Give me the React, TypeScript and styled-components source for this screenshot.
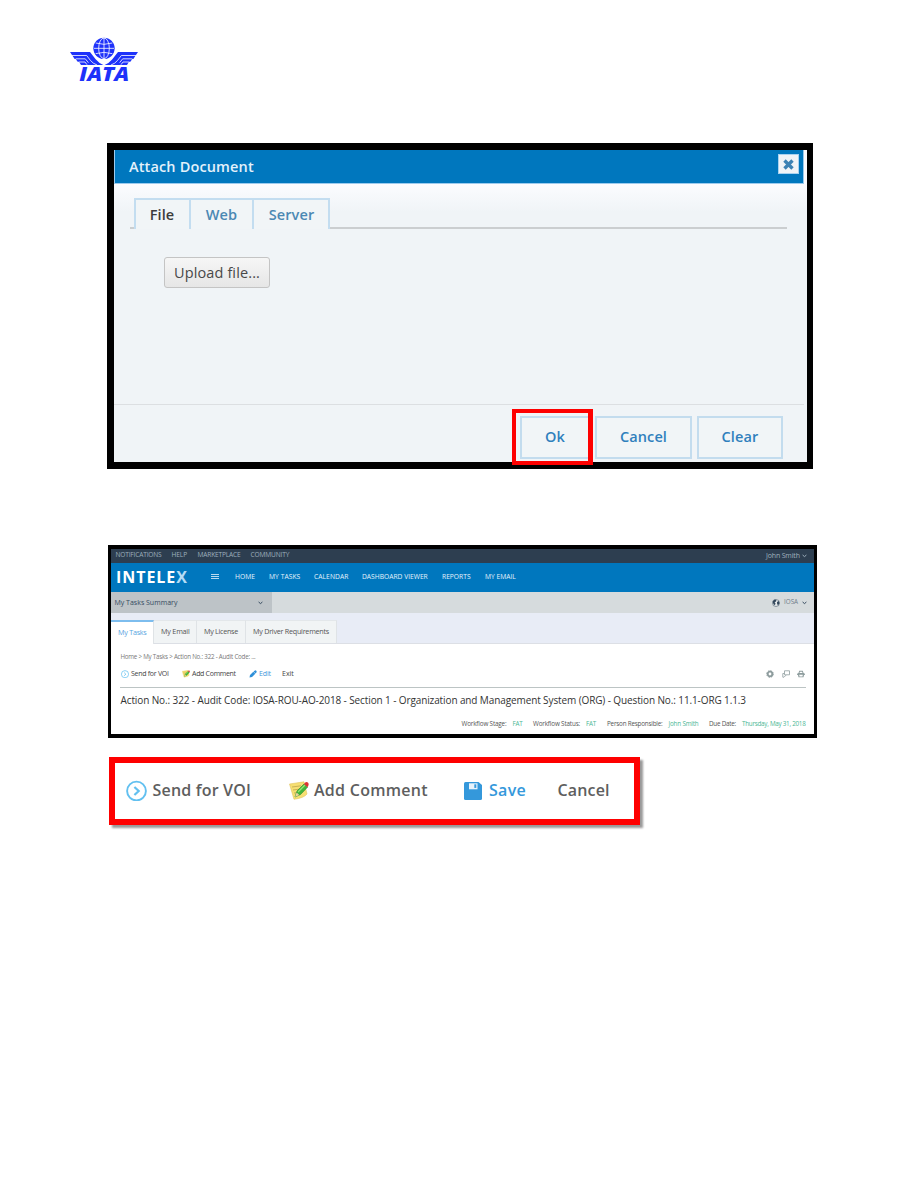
import React from "react";
import styled, { createGlobalStyle } from "styled-components";

const Global = createGlobalStyle`
  * { box-sizing: border-box; }
  body { margin: 0; background: #fff; font-family: "Open Sans", sans-serif; }
  svg { display: block; flex: none; }
`;

const Page = styled.main`
  width: 918px;
  height: 1188px;
  background: #fff;
  overflow: hidden;
`;
const LogoBar = styled.header`
  height: 143px;
  padding: 36px 0 0 69px;
`;

const Label = styled.span<{ $w: number; $size: number; $weight?: number; $color?: string; $track?: number; $ml?: number }>`
  display: block;
  flex: none;
  width: ${(p) => p.$w}px;
  margin-left: ${(p) => p.$ml ?? 0}px;
  font-size: ${(p) => p.$size}px;
  font-weight: ${(p) => p.$weight ?? 400};
  color: ${(p) => p.$color ?? "inherit"};
  letter-spacing: ${(p) => p.$track ?? 0}px;
  line-height: 1.36;
  white-space: nowrap;
`;

/* Attach Document dialog */
const DialogFrame = styled.section`
  position: relative;
  width: 706px;
  height: 326px;
  margin-left: 107px;
  border: solid #000;
  border-width: 7px 6px 7px 7px;
  background: linear-gradient(#fbfcff 33px, #f0f4f7 62px);
`;
const DialogHeader = styled.div`
  display: flex;
  align-items: center;
  justify-content: space-between;
  width: 690px;
  height: 34px;
  padding: 0 5px 0 14px;
  background: #0077be;
  border: solid #9ccbee;
  border-width: 0 1px 1px 1px;
`;
const CloseButton = styled.button`
  display: grid;
  place-items: center;
  width: 21px;
  height: 20px;
  margin: -5px -1px 0 0;
  padding: 0;
  background: #f0f4f7;
  border: 1px solid #a9d2ef;
`;
const DialogTabs = styled.div`
  display: flex;
  height: 31px;
  margin: 14px 20px 0 16px;
`;
const TabEdge = styled.i<{ $grow?: boolean }>`
  width: 4px;
  flex: ${(p) => (p.$grow ? 1 : "none")};
  border-bottom: 2px solid #cbced0;
`;
const DialogTab = styled.button<{ $w: number; $last?: boolean }>`
  display: flex;
  align-items: center;
  width: ${(p) => p.$w}px;
  padding: 0 0 0 15px;
  border: solid #c3ddf0;
  border-width: 2px ${(p) => (p.$last ? "2px" : 0)} 0 2px;
  background: #f1f5f7;
  font-family: inherit;
`;
const DialogBody = styled.div`
  height: 175px;
  padding: 28px 0 0 50px;
`;
const UploadButton = styled.button`
  display: flex;
  align-items: center;
  width: 106px;
  height: 31px;
  padding: 0 0 0 9px;
  border: 1px solid #c4c4c4;
  border-radius: 3px;
  background: linear-gradient(#f6f6f6, #e6e6e6);
  font-family: inherit;
`;
const DialogFooter = styled.div`
  display: flex;
  width: 690px;
  height: 58px;
  padding: 11px 0 0 406px;
  border-top: 1px solid #dcdfe2;
`;
const FooterButton = styled.button<{ $w: number; $ml?: number }>`
  display: flex;
  align-items: center;
  justify-content: center;
  width: ${(p) => p.$w}px;
  height: 43px;
  margin-left: ${(p) => p.$ml ?? 0}px;
  padding: 0 0 1px;
  border: 2px solid #c3dcee;
  background: #f1f5f7;
  font-family: inherit;
`;
const Highlight = styled.div`
  position: absolute;
  left: 398px;
  top: 259px;
  width: 81px;
  height: 56px;
  border: solid #fe0000;
  border-width: 4px 5px 4px 4px;
`;

/* Task application window */
const AppFrame = styled.section`
  width: 709px;
  height: 193px;
  margin: 76px 0 0 108px;
  border: solid #000;
  border-width: 4px 3px;
  background: #fff;
`;
const Row = styled.div<{ $h: number; $bg?: string; $pad?: string }>`
  display: flex;
  align-items: center;
  height: ${(p) => p.$h}px;
  background: ${(p) => p.$bg ?? "transparent"};
  padding: ${(p) => p.$pad ?? "0"};
`;
const Spacer = styled.i`
  flex: 1;
`;
const Gap = styled.i<{ $w: number }>`
  flex: none;
  width: ${(p) => p.$w}px;
`;
const Brand = styled.span`
  flex: none;
  width: 73px;
  font-size: 16px;
  font-weight: 700;
  letter-spacing: 0.95px;
  line-height: 22px;
  color: #fff;
  white-space: nowrap;

  b {
    font-weight: 700;
    color: #b5dcf5;
  }
`;
const SummaryMenu = styled.div`
  display: flex;
  align-items: center;
  width: 161px;
  height: 21px;
  padding-left: 3.5px;
  background: #bdc3c7;
`;
const AppTabs = styled.nav`
  display: flex;
  align-items: flex-end;
  height: 31px;
  background: #e8ecf6;
  border-bottom: 1px solid #dcdfe5;
`;
const AppTab = styled.div<{ $w: number; $active?: boolean }>`
  display: flex;
  align-items: center;
  width: ${(p) => p.$w}px;
  height: ${(p) => (p.$active ? 24 : 23)}px;
  margin-bottom: ${(p) => (p.$active ? -1 : 0)}px;
  padding-left: 7px;
  padding-bottom: ${(p) => (p.$active ? 1 : 0)}px;
  background: ${(p) => (p.$active ? "#fff" : "#f1f4f5")};
  border-top: ${(p) => (p.$active ? "2px solid #7dbdee" : "1px solid #e3e7ea")};
  border-right: 1px solid #dfe3e6;
`;
const Rule = styled.hr`
  height: 1px;
  margin: 0 8px 0 9px;
  border: 0;
  background: #bcc4c4;
`;

/* Enlarged action bar */
const ActionBar = styled.section`
  display: flex;
  align-items: center;
  width: 531px;
  height: 68px;
  margin: 19px 0 0 109px;
  padding: 0 0 1px 11px;
  border: 6px solid #fe0000;
  box-shadow: 3px 3px 2px rgba(0, 0, 0, 0.4);
`;

const IataLogo = () => (
  <svg width="70" height="54" viewBox="0 0 210 162" fill="#1e32fa">
    <circle cx="105" cy="37" r="32" />
    <g fill="none" stroke="#fff" strokeWidth="2.4">
      <path d="M105 6V68M75 37H135M80 21Q105 29 130 21M80 53Q105 45 130 53" />
      <ellipse cx="105" cy="37" rx="16" ry="31" />
    </g>
    <g id="wing">
      <path d="M3 48H63L80 70Q90 82 103 87H36L30 77H26L20 69H17L11 60Z" />
      <path d="M8 58.500H53L64 73Q72 83 84 87M20 68.500H49L58 80M30 78H48L54 86" fill="none" stroke="#fff" strokeWidth="2.400" />
    </g>
    <use href="#wing" transform="translate(210 0) scale(-1 1)" />
    <text x="31" y="135" fontFamily="Open Sans, sans-serif" fontSize="57" fontWeight="800" fontStyle="italic" textLength="150" lengthAdjust="spacingAndGlyphs">IATA</text>
  </svg>
);
const Chevron = ({ color }: { color: string }) => (
  <svg width="5" height="4" viewBox="0 0 5 4" fill="none" stroke={color} strokeWidth="1">
    <path d="M.6 1l1.9 1.6L4.4 1" />
  </svg>
);
const SendIcon = ({ size }: { size: number }) => (
  <svg width={size} height={size} viewBox="0 0 21 21" fill="none" stroke="#62c0f0">
    <circle cx="10.5" cy="11" r="9.4" strokeWidth="1.9" />
    <path d="M8.4 7l4.3 4-4.3 4" strokeWidth="2.2" />
  </svg>
);
const NoteIcon = ({ size }: { size: number }) => (
  <svg width={size} height={size} viewBox="0 0 20 20">
    <path d="M.5 3L15 .8 18 13Q15 17 5 18.3Z" fill="#f6df72" stroke="#e2c560" strokeWidth=".6" />
    <path d="M3 6l9-1.2M4 9l6-.8M5 12l4-.5" stroke="#c3aa52" strokeWidth=".9" />
    <path d="M6 16l2-6 7-7 3.5 3.2-7 7.3z" fill="#43b53b" stroke="#238a2a" strokeWidth=".6" />
    <path d="M9 11l7-7" stroke="#95e671" strokeWidth="1.2" />
    <path d="M6 16l1.6-4.5 2.7 2.6z" fill="#edd0a0" />
    <path d="M15 3l1.200-1.600Q18 .3 19.300 2q.8 1.600-.8 4.200z" fill="#dc3333" />
  </svg>
);
const PencilIcon = () => (
  <svg width="8" height="8" viewBox="0 0 8 8" fill="#2e8fd8">
    <path d="M.5 7.600L1 5 4.300 1.800 6.300 3.700 3 7zM4.600 1.500L5.900.4Q6.700.1 7.300.8T7.600 2.200L6.500 3.400z" />
  </svg>
);
const DiskIcon = () => (
  <svg width="18" height="18" viewBox="0 0 18 18">
    <path d="M1.500 0H14.500L18 3V16.500Q18 18 16.500 18H1.500Q0 18 0 16.500V1.500Q0 0 1.500 0Z" fill="#3498db" />
    <path d="M5 1.300h8.500v6H5z" fill="#e8f3fb" />
    <path d="M10.300 2.300h2v3.600h-2z" fill="#3498db" />
  </svg>
);
const GlobeIcon = () => (
  <svg width="8" height="8" viewBox="0 0 8 8">
    <circle cx="4" cy="4" r="3.500" fill="#e4e8ea" stroke="#4a5b6c" strokeWidth=".6" />
    <path d="M.6 2.500L2.600.6 4.400.9 4 2.600 2.600 3.300 3.500 4.600 2.900 6.200 1.400 5ZM5 3L6.800 2 7.500 4.200 6 6.500 5.100 4.800Z" fill="#33475b" />
  </svg>
);
const GearIcon = () => (
  <svg width="8" height="8" viewBox="0 0 8 8" fill="none" stroke="#8d9c9d">
    <circle cx="4" cy="4" r="2.300" strokeWidth="1.800" />
    <circle cx="4" cy="4" r="3.300" strokeWidth="1" strokeDasharray="1.500 1.090" />
  </svg>
);
const WindowsIcon = () => (
  <svg width="8" height="8" viewBox="0 0 8 8" fill="none" stroke="#9aa7a8" strokeWidth=".9">
    <path d="M2.500.8h5v4h-5zM2.500 3.500H.8v3.700h1.200L4.200 5" />
  </svg>
);
const PrinterIcon = () => (
  <svg width="8" height="8" viewBox="0 0 8 8" fill="#8d9c9d">
    <path d="M1.500 3L2.200.8h3.600L6.500 3Q8 3 8 5H7L6.500 7.300h-5L1 5H0Q0 3 1.500 3zM2.900 1.700L2.500 3h3L5.100 1.700zM2.200 4.700l.3 1.700h3l.3-1.700z" fillRule="evenodd" />
  </svg>
);

const T = (p: { t: string; w: number; s: number; wt?: number; c?: string; k?: number; ml?: number }) => (
  <Label $w={p.w} $size={p.s} $weight={p.wt} $color={p.c} $track={p.k} $ml={p.ml}>{p.t}</Label>
);

export default function App() {
  const nav = "#e6f3fc";
  const top = "#9fb0bd";
  return (
    <Page>
      <Global />
      <LogoBar><IataLogo /></LogoBar>

      <DialogFrame>
        <DialogHeader>
          <T t="Attach Document" w={125} s={14.5} wt={600} c="#e3f1fb" k={0.14} />
          <CloseButton aria-label="Close">
            <svg width="11" height="11" viewBox="0 0 11 11" stroke="#3c82b4" strokeWidth="3.400"><path d="M1.500 1.500l8 8M9.500 1.500l-8 8" /></svg>
          </CloseButton>
        </DialogHeader>
        <DialogTabs>
          <TabEdge />
          <DialogTab $w={55}><T t="File" w={25} s={14.5} wt={600} c="#3c3c3c" k={0.1} ml={-1.5} /></DialogTab>
          <DialogTab $w={63}><T t="Web" w={32} s={14.5} wt={600} c="#4b88b3" k={0.2} ml={-0.5} /></DialogTab>
          <DialogTab $w={78} $last><T t="Server" w={46} s={14.5} wt={600} c="#4b88b3" k={0.1} ml={-0.5} /></DialogTab>
          <TabEdge $grow />
        </DialogTabs>
        <DialogBody>
          <UploadButton><T t="Upload file..." w={86} s={14.5} c="#484848" k={0.12} /></UploadButton>
        </DialogBody>
        <DialogFooter>
          <FooterButton $w={72}><T t="Ok" w={24} s={14.5} wt={600} c="#2f80bd" k={0.14} ml={-2} /></FooterButton>
          <FooterButton $w={97} $ml={3}><T t="Cancel" w={47} s={14.5} wt={600} c="#2f80bd" k={0.09} /></FooterButton>
          <FooterButton $w={86} $ml={5}><T t="Clear" w={37} s={14.5} wt={600} c="#2f80bd" k={0.12} /></FooterButton>
        </DialogFooter>
        <Highlight />
      </DialogFrame>

      <AppFrame>
        <Row $h={14} $bg="#2d3e50" $pad="0 7px 1px 4.500px">
          <T t="NOTIFICATIONS" w={46} s={6.6} c={top} k={-0.18} />
          <T t="HELP" w={16} s={6.6} c={top} ml={10} k={-0.1} />
          <T t="MARKETPLACE" w={43} s={6.6} c={top} ml={10} k={-0.18} />
          <T t="COMMUNITY" w={39} s={6.6} c={top} ml={10} k={-0.15} />
          <Spacer />
          <T t="John Smith" w={33} s={7} c={top} k={-0.16} />
          <Gap $w={3} />
          <Chevron color={top} />
        </Row>
        <Row $h={29} $bg="#0077be" $pad="0 0 2px 5px">
          <Brand>INTELE<b>X</b></Brand>
          <Gap $w={22} />
          <svg width="8" height="8" viewBox="0 0 8 8" stroke="#b9d9ee" strokeWidth="1"><path d="M0 1.500h8M0 3.500h8M0 5.500h8" /></svg>
          <T t="HOME" w={20} s={6.7} wt={500} c={nav} ml={16} />
          <T t="MY TASKS" w={32} s={6.7} wt={500} c={nav} ml={14} k={0.06} />
          <T t="CALENDAR" w={35} s={6.7} wt={500} c={nav} ml={13} k={0.06} />
          <T t="DASHBOARD VIEWER" w={66} s={6.7} wt={500} c={nav} ml={13} />
          <T t="REPORTS" w={29} s={6.7} wt={500} c={nav} ml={14} />
          <T t="MY EMAIL" w={31} s={6.7} wt={500} c={nav} ml={14} />
        </Row>
        <Row $h={21} $bg="#d6dbdd" $pad="0 7px 0 0">
          <SummaryMenu>
            <T t="My Tasks Summary" w={63} s={7} c="#34495e" />
            <Gap $w={80} />
            <Chevron color="#34495e" />
          </SummaryMenu>
          <Spacer />
          <GlobeIcon />
          <T t="IOSA" w={14} s={6.3} c="#6f7d8a" ml={4} />
          <Gap $w={4} />
          <Chevron color="#34495e" />
        </Row>
        <AppTabs>
          <AppTab $w={43} $active><T t="My Tasks" w={29} s={7.2} c="#57a5df" k={-0.25} /></AppTab>
          <AppTab $w={43}><T t="My Email" w={29} s={7.2} c="#555" k={-0.2} /></AppTab>
          <AppTab $w={49}><T t="My License" w={34} s={7.2} c="#555" k={-0.29} /></AppTab>
          <AppTab $w={91}><T t="My Driver Requirements" w={76} s={7.2} c="#555" k={-0.25} /></AppTab>
        </AppTabs>
        <Row $h={22} $pad="4px 0 0 9.500px">
          <T t="Home > My Tasks > Action No.: 322 - Audit Code: ..." w={135} s={6.2} c="#777" k={-0.215} />
        </Row>
        <Row $h={21} $pad="0 9px 6px 10px">
          <SendIcon size={8} />
          <T t="Send for VOI" w={38} s={7} c="#444" ml={2} k={-0.28} />
          <Gap $w={13} />
          <NoteIcon size={8} />
          <T t="Add Comment" w={44} s={7} c="#444" ml={2} k={-0.3} />
          <Gap $w={13} />
          <PencilIcon />
          <T t="Edit" w={12} s={7} c="#3f96da" ml={2} k={-0.11} />
          <T t="Exit" w={12} s={7} c="#444" ml={11} />
          <Spacer />
          <GearIcon />
          <Gap $w={8} />
          <WindowsIcon />
          <Gap $w={7} />
          <PrinterIcon />
        </Row>
        <Rule />
        <Row $h={24} $pad="2px 0 0 9.500px">
          <T t="Action No.: 322 - Audit Code: IOSA-ROU-AO-2018 - Section 1 - Organization and Management System (ORG) - Question No.: 11.1-ORG 1.1.3" w={625} s={10} wt={500} c="#333" k={-0.11} />
        </Row>
        <Row $h={24} $pad="1px 0 0 350.500px">
          <T t="Workflow Stage:" w={45} s={6.3} c="#555" k={-0.154} />
          <T t="FAT" w={10} s={6.3} c="#4bb795" ml={6} k={-0.2} />
          <T t="Workflow Status:" w={47} s={6.3} c="#555" ml={10.5} k={-0.153} />
          <T t="FAT" w={10} s={6.3} c="#4bb795" ml={6} k={-0.2} />
          <T t="Person Responsible:" w={55.5} s={6.3} c="#555" ml={11} k={-0.2} />
          <T t="John Smith" w={30} s={6.3} c="#4bb795" ml={6} k={-0.18} />
          <T t="Due Date:" w={27} s={6.3} c="#555" ml={10.5} k={-0.23} />
          <T t="Thursday, May 31, 2018" w={63.5} s={6.3} c="#4bb795" ml={6} k={-0.266} />
        </Row>
      </AppFrame>

      <ActionBar>
        <SendIcon size={21} />
        <T t="Send for VOI" w={99} s={16} wt={600} c="#5e5e5e" ml={5.5} k={0.19} />
        <Gap $w={37} />
        <NoteIcon size={20} />
        <T t="Add Comment" w={114} s={16} wt={600} c="#5e5e5e" ml={5.5} k={0.27} />
        <Gap $w={35.5} />
        <DiskIcon />
        <T t="Save" w={37} s={16} wt={600} c="#3498db" ml={7.5} k={0.28} />
        <T t="Cancel" w={52} s={16} wt={600} c="#5e5e5e" ml={31.5} k={0.15} />
      </ActionBar>
    </Page>
  );
}
